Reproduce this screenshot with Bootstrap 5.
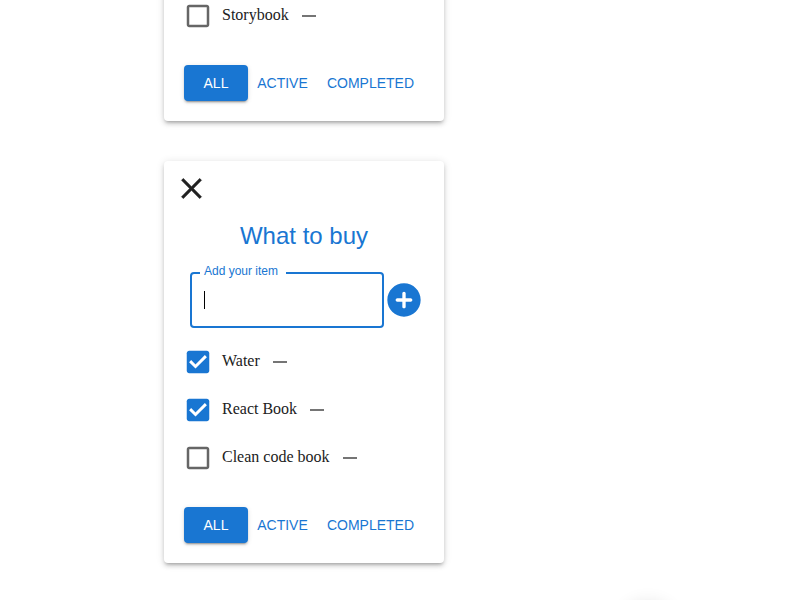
<!DOCTYPE html>
<html lang="en">
<head>
<meta charset="utf-8">
<meta name="viewport" content="width=device-width, initial-scale=1">
<title>Todo lists</title>
<link href="https://cdn.jsdelivr.net/npm/bootstrap@5.3.0/dist/css/bootstrap.min.css" rel="stylesheet">
<style>
:root { --main: #1976d2; --ink: #212121; }
body { font-family: "Liberation Sans", Arial, sans-serif; color: var(--ink); overflow: hidden; }
.board { padding-left: 164px; gap: 40px; }
.todo-card {
  width: 100%; max-width: 280px; padding: 10px 20px 20px; border-radius: 4px; background: #fff;
  box-shadow: 0 3px 3px -2px rgba(0,0,0,.2), 0 3px 4px 0 rgba(0,0,0,.14), 0 1px 8px 0 rgba(0,0,0,.12);
}
/* the first list continues above the top edge of the window */
.scrolled-off { margin-top: -18px; }
.icon-btn { padding: 0; border: 0; background: none; line-height: 0; color: inherit; }
.close-btn { margin-left: -10px; }
.todo-title { font-size: 24px; line-height: 32px; color: var(--main); font-weight: 400; margin: 14px 0 20px; text-align: center; }
.add-row { padding-left: 6px; }
.field { flex: 1 1 0; }
.field input.form-control {
  height: 56px; padding: 0 12px; border: 2px solid var(--main); border-radius: 4px;
  box-shadow: none; caret-color: transparent;
}
.field label { position: absolute; left: 10px; top: -9px; padding: 0 8px 0 4px; background: #fff; color: var(--main); font-size: 12px; line-height: 16px; }
.caret-line { position: absolute; left: 14px; top: 19px; width: 1px; height: 18px; background: #000; }
.add-btn { color: var(--main); width: 40px; }
.todo-items { margin: 10px 0 25px; }
.todo-item { height: 48px; font-family: "Liberation Serif", "Times New Roman", serif; font-size: 16px; }
.todo-item .form-check-input {
  width: 30px; height: 30px; margin: 0 9px 0 -1px; border: 0; border-radius: 0; background-color: transparent; flex: none;
  background-size: 30px 30px;
  background-image: url("data:image/svg+xml,%3Csvg xmlns='http://www.w3.org/2000/svg' viewBox='0 0 24 24'%3E%3Cpath fill='%23666' d='M19 5v14H5V5h14m0-2H5c-1.1 0-2 .9-2 2v14c0 1.1.9 2 2 2h14c1.1 0 2-.9 2-2V5c0-1.1-.9-2-2-2z'/%3E%3C/svg%3E");
}
.todo-item .form-check-input:checked {
  background-color: transparent;
  background-image: url("data:image/svg+xml,%3Csvg xmlns='http://www.w3.org/2000/svg' viewBox='0 0 24 24'%3E%3Cpath fill='%231976d2' d='M19 3H5c-1.11 0-2 .9-2 2v14c0 1.1.89 2 2 2h14c1.11 0 2-.9 2-2V5c0-1.1-.89-2-2-2z'/%3E%3Cpath fill='none' stroke='%23fff' stroke-width='2.3' d='M5.7 11.3L10 15.6l8.3-8.3'/%3E%3C/svg%3E");
}
.todo-item label { line-height: 20px; padding-bottom: 2px; }
.remove-btn { color: #757575; margin-left: 8px; }
.filters { display: grid; grid-template-columns: 64fr 69fr 107fr; }
.filters .btn { height: 36px; padding: 0; border: 0; border-radius: 4px; font-size: 14px; line-height: 24px; color: var(--main); }
.filters .btn.active {
  background: var(--main); color: #fff;
  box-shadow: 0 3px 1px -2px rgba(0,0,0,.2), 0 2px 2px 0 rgba(0,0,0,.14), 0 1px 5px 0 rgba(0,0,0,.12);
}
/* round floating control, just below the fold */
.floating-dot {
  position: fixed; left: 620px; top: 602px; width: 56px; height: 56px; border-radius: 50%;
  box-shadow: 0 3px 5px -1px rgba(0,0,0,.2), 0 6px 10px 0 rgba(0,0,0,.14), 0 1px 18px 0 rgba(0,0,0,.12);
}
</style>
</head>
<body class="min-vh-100">
<main class="board d-flex flex-column">
  <section class="todo-card scrolled-off">
    <ul class="list-unstyled todo-items mt-0">
      <li class="todo-item d-flex align-items-center">
        <input class="form-check-input" type="checkbox" id="story">
        <label for="story">Storybook</label>
        <button type="button" class="icon-btn remove-btn" aria-label="Remove Storybook"><svg width="24" height="24" viewBox="0 0 24 24" fill="currentColor"><path d="M19 13H5v-2h14v2z"/></svg></button>
      </li>
    </ul>
    <div class="filters">
      <button type="button" class="btn active">ALL</button>
      <button type="button" class="btn">ACTIVE</button>
      <button type="button" class="btn">COMPLETED</button>
    </div>
  </section>

  <section class="todo-card">
    <button type="button" class="icon-btn close-btn" aria-label="Delete list"><svg width="35" height="35" viewBox="0 0 24 24" fill="currentColor" stroke="currentColor" stroke-width=".2"><path d="M19 6.41L17.59 5 12 10.59 6.41 5 5 6.41 10.59 12 5 17.59 6.41 19 12 13.41 17.59 19 19 17.59 13.41 12z"/></svg></button>
    <h2 class="todo-title">What to buy</h2>
    <div class="add-row d-flex align-items-center">
      <div class="field position-relative">
        <input type="text" class="form-control" id="new-item">
        <label for="new-item">Add your item</label>
        <span class="caret-line"></span>
      </div>
      <button type="button" class="icon-btn add-btn" aria-label="Add item"><svg width="40" height="40" viewBox="0 0 24 24" fill="currentColor"><path d="M12 2C6.48 2 2 6.48 2 12s4.48 10 10 10 10-4.48 10-10S17.52 2 12 2zm4 11h-3v3c0 .55-.45 1-1 1s-1-.45-1-1v-3H8c-.55 0-1-.45-1-1s.45-1 1-1h3V8c0-.55.45-1 1-1s1 .45 1 1v3h3c.55 0 1 .45 1 1s-.45 1-1 1z"/></svg></button>
    </div>
    <ul class="list-unstyled todo-items">
      <li class="todo-item d-flex align-items-center">
        <input class="form-check-input" type="checkbox" id="water" checked>
        <label for="water">Water</label>
        <button type="button" class="icon-btn remove-btn" aria-label="Remove Water"><svg width="24" height="24" viewBox="0 0 24 24" fill="currentColor"><path d="M19 13H5v-2h14v2z"/></svg></button>
      </li>
      <li class="todo-item d-flex align-items-center">
        <input class="form-check-input" type="checkbox" id="react" checked>
        <label for="react">React Book</label>
        <button type="button" class="icon-btn remove-btn" aria-label="Remove React Book"><svg width="24" height="24" viewBox="0 0 24 24" fill="currentColor"><path d="M19 13H5v-2h14v2z"/></svg></button>
      </li>
      <li class="todo-item d-flex align-items-center">
        <input class="form-check-input" type="checkbox" id="clean">
        <label for="clean">Clean code book</label>
        <button type="button" class="icon-btn remove-btn" aria-label="Remove Clean code book"><svg width="24" height="24" viewBox="0 0 24 24" fill="currentColor"><path d="M19 13H5v-2h14v2z"/></svg></button>
      </li>
    </ul>
    <div class="filters">
      <button type="button" class="btn active">ALL</button>
      <button type="button" class="btn">ACTIVE</button>
      <button type="button" class="btn">COMPLETED</button>
    </div>
  </section>
</main>
<div class="floating-dot"></div>
<script src="https://cdn.jsdelivr.net/npm/bootstrap@5.3.0/dist/js/bootstrap.bundle.min.js"></script>
</body>
</html>
